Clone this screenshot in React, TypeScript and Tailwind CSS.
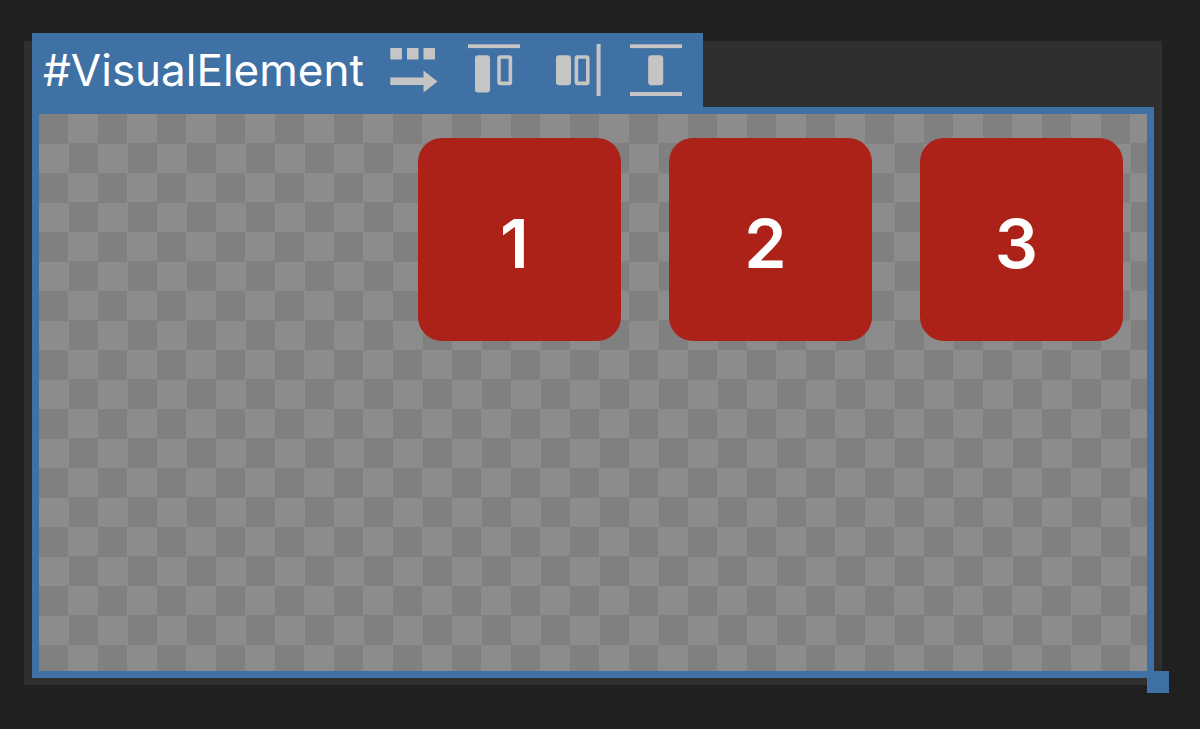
import type { ReactNode } from 'react';

const boxes = ['1', '2', '3'];

function ToolButton({ label, children }: { label: string; children: ReactNode }) {
  return (
    <button type="button" aria-label={label} className="shrink-0 cursor-pointer text-[#c5c5c5] hover:text-white">
      <svg width="52" height="52" viewBox="0 0 52 52" fill="currentColor" aria-hidden="true">
        {children}
      </svg>
    </button>
  );
}

function Toolbar() {
  return (
    <div className="flex items-center gap-[29px]">
      <ToolButton label="Flex direction: row">
        <rect x="3.3" y="4" width="11.6" height="11.5" />
        <rect x="20" y="4" width="11.5" height="11.5" />
        <rect x="36.5" y="4" width="11.5" height="11.5" />
        <path d="M3.3 33.5H36.5V26.5L50.5 37.4L36.5 48.5V41H3.3Z" />
      </ToolButton>
      <ToolButton label="Align items: start">
        <rect x="0" y="0.3" width="52" height="3.8" />
        <rect x="7" y="11.2" width="15" height="37.3" rx="3" />
        <rect x="31" y="13" width="11.4" height="26.4" rx="1.2" fill="none" stroke="currentColor" strokeWidth="3.6" />
      </ToolButton>
      <ToolButton label="Justify content: end">
        <rect x="7" y="11.2" width="15" height="30" rx="3" />
        <rect x="27.4" y="13" width="11.4" height="26.4" rx="1.2" fill="none" stroke="currentColor" strokeWidth="3.6" />
        <rect x="47.6" y="0" width="4" height="52" />
      </ToolButton>
      <ToolButton label="Align content: stretch">
        <rect x="0" y="0.3" width="52" height="3.8" />
        <rect x="18.2" y="11.2" width="15" height="30" rx="3" />
        <rect x="0" y="48" width="52" height="4" />
      </ToolButton>
    </div>
  );
}

export default function App() {
  return (
    <main className="flex min-h-screen flex-col bg-[#202020] pt-[41px] pr-[38px] pb-11 pl-6 font-['Inter',sans-serif]">
      <section className="flex flex-1 flex-col bg-[#2f2f2f] px-2 pb-[7px]">
        {/* Selection header, pokes out above the panel */}
        <header className="-mt-2 flex h-[74px] items-center self-start bg-[#4071a4] pr-[21px] pl-[11px]">
          <h1 className="mr-[23px] text-[44px] leading-[52px] font-normal text-white">#VisualElement</h1>
          <Toolbar />
        </header>

        {/* Canvas */}
        <div className="relative flex flex-1 items-start justify-end gap-12 border-[7px] border-[#4071a4] bg-[conic-gradient(#8c8c8c_25%,#808080_0_50%,#8c8c8c_0_75%,#808080_0)] bg-[length:59px_59px] p-6">
          {boxes.map((label) => (
            <div
              key={label}
              className="flex size-[203px] items-center justify-center rounded-3xl bg-[#ac2218] pt-1.5 pr-2.5 text-[68px] font-semibold text-white"
            >
              {label}
            </div>
          ))}
          {/* Resize handle */}
          <div className="absolute top-full left-full size-[22px] cursor-nwse-resize bg-[#4071a4]" />
        </div>
      </section>
    </main>
  );
}
